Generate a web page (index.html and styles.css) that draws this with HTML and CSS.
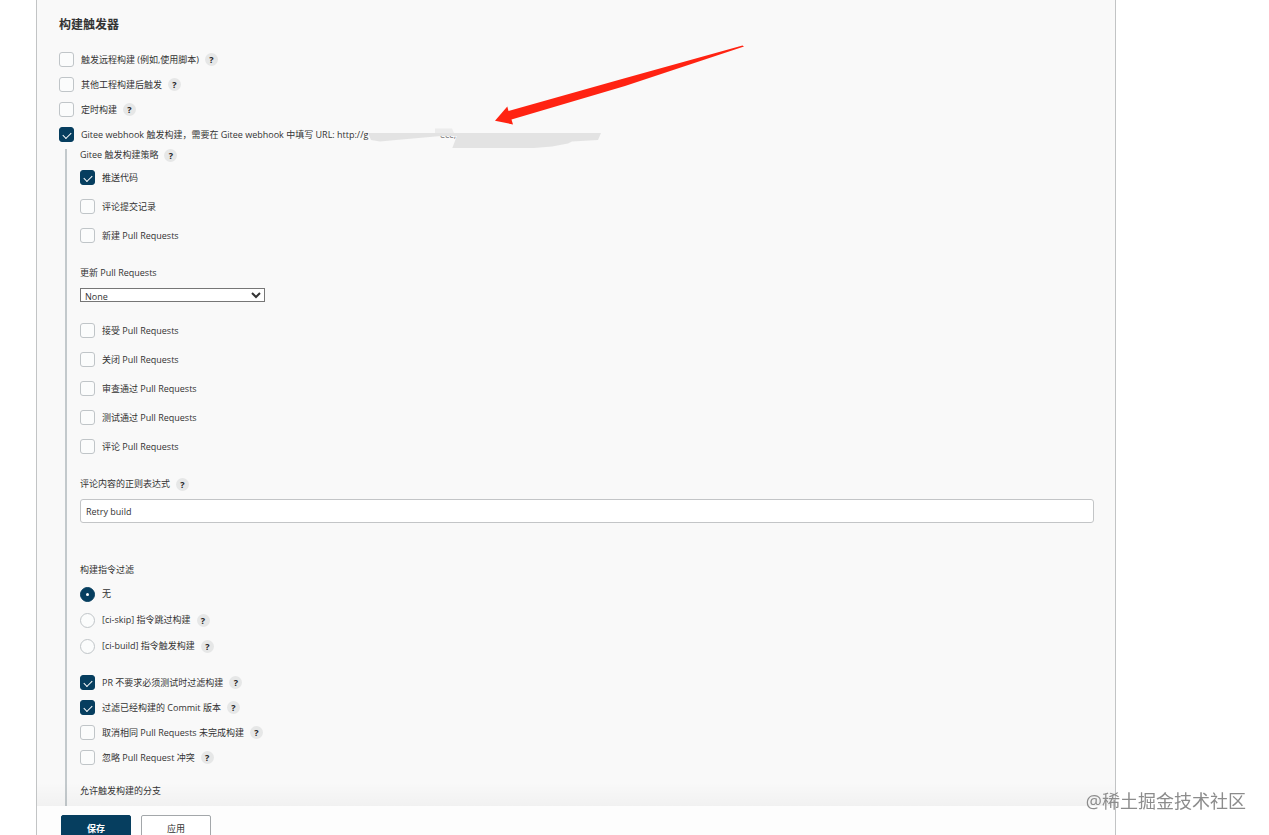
FILE: index.html
```html
<!DOCTYPE html>
<html lang="zh-CN">
<head>
    <meta charset="UTF-8">
    <title>构建触发器</title>
    <meta name="viewport" content="width=device-width, initial-scale=1.0">
    <link rel="stylesheet" href="styles.css">
</head>
<body>
    <form class="panel">
        <div class="content">
            <h2>构建触发器</h2>

            <div class="row">
                <label><input type="checkbox" name="remote">触发远程构建 (例如,使用脚本)</label>
                <a class="help" href="#">?</a>
            </div>
            <div class="row">
                <label><input type="checkbox" name="after">其他工程构建后触发</label>
                <a class="help" href="#">?</a>
            </div>
            <div class="row">
                <label><input type="checkbox" name="timer">定时构建</label>
                <a class="help" href="#">?</a>
            </div>
            <div class="row">
                <label><input type="checkbox" name="gitee" checked>Gitee webhook 触发构建，需要在 Gitee webhook 中填写 URL: http://g</label>
            </div>

            <div class="nested">
                <div class="title">Gitee 触发构建策略 <a class="help" href="#">?</a></div>
                <div class="events">
                    <div class="row"><label><input type="checkbox" name="push" checked>推送代码</label></div>
                    <div class="row"><label><input type="checkbox" name="commit_note">评论提交记录</label></div>
                    <div class="row"><label><input type="checkbox" name="pr_open">新建 Pull Requests</label></div>
                </div>

                <div class="field">
                    <label class="title" for="pr-update">更新 Pull Requests</label>
                    <select id="pr-update">
                        <option>None</option>
                        <option>Source Branch updated</option>
                        <option>Target Branch updated</option>
                    </select>
                </div>

                <div class="events spaced">
                    <div class="row"><label><input type="checkbox" name="pr_accept">接受 Pull Requests</label></div>
                    <div class="row"><label><input type="checkbox" name="pr_close">关闭 Pull Requests</label></div>
                    <div class="row"><label><input type="checkbox" name="pr_review">审查通过 Pull Requests</label></div>
                    <div class="row"><label><input type="checkbox" name="pr_test">测试通过 Pull Requests</label></div>
                    <div class="row"><label><input type="checkbox" name="pr_note">评论 Pull Requests</label></div>
                </div>

                <div class="field">
                    <div class="title">
                        <label for="regex">评论内容的正则表达式</label>
                        <a class="help" href="#">?</a>
                    </div>
                    <input type="text" id="regex" value="Retry build">
                </div>

                <div class="filter" role="radiogroup" aria-labelledby="filter-title">
                    <div class="title" id="filter-title">构建指令过滤</div>
                    <div class="row"><label><input type="radio" name="ci" checked>无</label></div>
                    <div class="row">
                        <label><input type="radio" name="ci">[ci-skip] 指令跳过构建</label>
                        <a class="help" href="#">?</a>
                    </div>
                    <div class="row">
                        <label><input type="radio" name="ci">[ci-build] 指令触发构建</label>
                        <a class="help" href="#">?</a>
                    </div>
                </div>

                <div class="options">
                    <div class="row">
                        <label><input type="checkbox" name="no_test" checked>PR 不要求必须测试时过滤构建</label>
                        <a class="help" href="#">?</a>
                    </div>
                    <div class="row">
                        <label><input type="checkbox" name="built" checked>过滤已经构建的 Commit 版本</label>
                        <a class="help" href="#">?</a>
                    </div>
                    <div class="row">
                        <label><input type="checkbox" name="cancel">取消相同 Pull Requests 未完成构建</label>
                        <a class="help" href="#">?</a>
                    </div>
                    <div class="row">
                        <label><input type="checkbox" name="conflict">忽略 Pull Request 冲突</label>
                        <a class="help" href="#">?</a>
                    </div>
                </div>

                <div class="title">允许触发构建的分支</div>
            </div>
        </div>

        <div class="footer">
            <button type="submit" class="primary">保存</button>
            <button type="button">应用</button>
        </div>

        <!-- arrow and the masked part of the url -->
        <svg class="annotation" viewBox="320 30 440 130" aria-hidden="true">
            <text x="440" y="138">ecc,</text>
            <path fill="#ececec" d="M435 128.5H452L454 133H435Z"/>
            <path fill="#e3e3e3" d="M368 133H470V136H441L396 140L380 141.5L371 140Z"/>
            <path fill="#e3e3e3" d="M458 133H601L598 140L572 141.5L568 143.5L552 146.5L534 148H452.3Z"/>
            <path fill="#ff2312" d="M495 120.7L507.3 106.5L508.5 111L622 79L742.5 45.5L744 46.5L625 86L511.5 119.5L513 124.5Z"/>
        </svg>
    </form>

    <div class="watermark">@稀土掘金技术社区</div>
</body>
</html>
```
FILE: styles.css
```css
* {
    box-sizing: border-box;
}

body {
    margin: 0;
    background: #fff;
    color: #333;
    font-family: "Open Sans", "Noto Sans CJK SC", sans-serif;
    font-size: 9px;
    line-height: 16px;
}

.panel {
    position: relative;
    display: flex;
    flex-direction: column;
    height: 100vh;
    margin: 0 153px 0 36px;
    border: solid #c2c4c5;
    border-width: 0 1px;
    background: #f9f9f9;
    overflow: hidden;
}

.content {
    position: relative;
    flex: 1;
    min-height: 0;
    padding: 17px 21px 0 22px;
    overflow: hidden;
}

/* fade above the sticky buttons */
.content::after {
    content: "";
    position: absolute;
    left: 0;
    right: 0;
    bottom: 0;
    height: 24px;
    background: linear-gradient(rgba(0, 0, 0, 0), rgba(0, 0, 0, 0.03));
}

h2 {
    margin: 0 0 14px;
    font-size: 12px;
    font-weight: 600;
    line-height: 16px;
}

.row {
    display: flex;
    align-items: center;
    gap: 6px;
    height: 25px;
}

.row label {
    display: flex;
    align-items: center;
    gap: 7px;
    white-space: nowrap;
}

.events .row {
    height: 29px;
}

.filter .row {
    height: 26px;
}

.title {
    display: flex;
    align-items: center;
    gap: 6px;
    height: 16px;
}

.help {
    width: 13px;
    height: 13px;
    border-radius: 50%;
    background: #e6e7e7;
    color: #222;
    font-weight: 700;
    line-height: 13px;
    text-align: center;
    text-decoration: none;
}

input[type="checkbox"],
input[type="radio"] {
    appearance: none;
    position: relative;
    width: 15px;
    height: 15px;
    margin: 0;
    border: 1px solid #c0c5c8;
    border-radius: 3px;
    background: #fbfcfc;
}

input[type="radio"] {
    border-radius: 50%;
}

input[type="checkbox"]:checked,
input[type="radio"]:checked {
    border-color: #063e5f;
    background: #063e5f;
}

input[type="checkbox"]:checked::after {
    content: "";
    position: absolute;
    left: 3px;
    top: 4px;
    width: 7px;
    height: 4px;
    border: solid #fff;
    border-width: 0 0 1px 1px;
    transform: rotate(-45deg);
}

input[type="radio"]:checked::after {
    content: "";
    position: absolute;
    left: 5px;
    top: 5px;
    width: 3px;
    height: 3px;
    border-radius: 50%;
    background: #fff;
}

.nested {
    position: relative;
    margin-left: 6px;
    padding-left: 15px;
}

.nested::before {
    content: "";
    position: absolute;
    left: 0;
    top: 2px;
    bottom: -20px;
    width: 2px;
    background: #c3c9cc;
}

.field {
    margin-top: 15px;
}

.spaced {
    margin-top: 14px;
}

select {
    display: block;
    width: 185px;
    height: 14px;
    margin-top: 7px;
    padding: 0;
    border: 1px solid #767676;
    border-radius: 0;
    background: #fff;
    color: #333;
    font: inherit;
    line-height: 12px;
}

input[type="text"] {
    display: block;
    width: 100%;
    height: 24px;
    margin-top: 7px;
    padding: 0 5px;
    border: 1px solid #c3c5c7;
    border-radius: 3px;
    background: #fff;
    color: #333;
    font: inherit;
}

.filter {
    margin-top: 39px;
}

.filter .title {
    margin-bottom: 3px;
}

.options {
    margin: 11px 0 13px;
}

.footer {
    display: flex;
    gap: 10px;
    height: 29px;
    padding: 9px 24px 0;
    background: #fdfdfd;
}

button {
    width: 70px;
    height: 28px;
    padding: 0;
    border: 1px solid #a3a7aa;
    border-radius: 2px;
    background: #fff;
    color: #333;
    font: inherit;
}

.primary {
    border-color: #063e5f;
    background: #063e5f;
    color: #fff;
    font-weight: 700;
}

.annotation {
    position: absolute;
    left: 283px;
    top: 30px;
    width: 440px;
    height: 130px;
    pointer-events: none;
}

.annotation text {
    fill: #777;
    font-size: 9px;
}

.watermark {
    position: fixed;
    right: 23px;
    bottom: 22px;
    color: #8c8c8c;
    font-size: 18px;
    line-height: 24px;
}
```
